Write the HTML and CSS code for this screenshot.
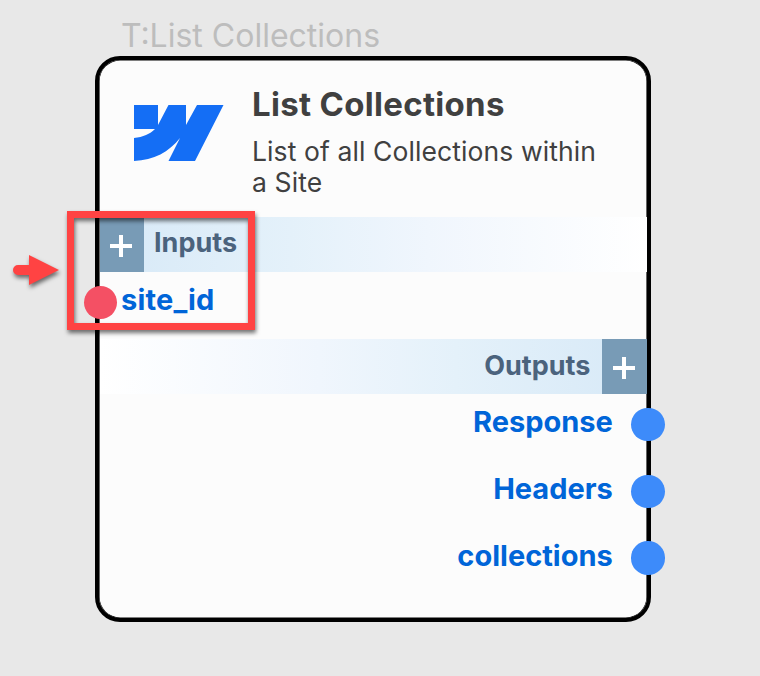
FILE: index.html
```html
<!DOCTYPE html>
<html lang="en">
<head>
<meta charset="utf-8">
<title>List Collections</title>
<link rel="stylesheet" href="styles.css">
</head>
<body>
<main class="canvas">
  <div class="caption"><span>T:List Collections</span></div>
  <section class="node">
    <header class="head">
      <svg class="logo" viewBox="0 0 90 57" aria-hidden="true"><path d="M0 0H24V20L34.500 0H52V20L63 0H89.500L61 56H34.500L46 33C35 47 20 55 0 56V33C9 32 16 29 21 24H0Z"/></svg>
      <div class="intro">
        <h1><span>List Collections</span></h1>
        <p>List of all Collections within<br>a Site</p>
      </div>
    </header>
    <div class="band inputs">
      <span class="add"><svg viewBox="0 0 22 22"><path d="M0 11H22M11 0V22"/></svg></span>
      <span class="band-label">Inputs</span>
    </div>
    <div class="port in"><span class="name">site_id</span><i class="dot red"></i></div>
    <div class="band outputs">
      <span class="band-label">Outputs</span>
      <span class="add"><svg viewBox="0 0 22 22"><path d="M0 11H22M11 0V22"/></svg></span>
    </div>
    <div class="port out"><span class="name">Response</span><i class="dot"></i></div>
    <div class="port out"><span class="name">Headers</span><i class="dot"></i></div>
    <div class="port out"><span class="name">collections</span><i class="dot"></i></div>
  </section>
  <div class="highlight"></div>
  <svg class="arrow" viewBox="0 0 60 50"><path d="M10 15H21V5L51 20L21 35V25H10A5 5 0 0 1 10 15Z"/></svg>
</main>
</body>
</html>
```
FILE: styles.css
```css
* { box-sizing: border-box; }
body { margin: 0; font-family: Inter, "Liberation Sans", sans-serif; }
.canvas { position: relative; width: 760px; height: 676px; padding: 16px 0 0 95px; background: #e8e8e8; overflow: hidden; }
.caption { height: 40px; padding-left: 26px; font-size: 32px; line-height: 40px; font-weight: 380; color: #bdbdbd; white-space: nowrap; }
.node { width: 556.3px; height: 565.6px; padding: .5px; border: 4px solid #000; box-shadow: inset 0 0 0 .6px #000; border-radius: 25px; background: #fcfcfc; }
.head { display: flex; height: 156px; padding: 44.5px 0 0 34.5px; }
.logo { width: 90px; height: 57px; fill: #146ef5; flex: none; }
.intro { margin: -21px 0 0 28px; color: #404040; white-space: nowrap; }
h1 { margin: 0; font-size: 33px; line-height: 40px; font-weight: 700; letter-spacing: .3px; }
p { margin: 12px 0 0; font-size: 26.5px; line-height: 31px; font-weight: 380; letter-spacing: .1px; }
.band { display: flex; height: 55.5px; }
.inputs { background: linear-gradient(90deg, #d7e9f7, #e4f1fa 35%, #f0f6fd 60%, #fff); }
.outputs { justify-content: flex-end; background: linear-gradient(270deg, #d7e9f7, #e4f1fa 35%, #f0f6fd 60%, #fff); }
.add { display: flex; width: 44.5px; height: 100%; align-items: center; justify-content: center; background: #789bb6; }
.add svg { width: 22px; height: 22px; margin: 3px 2px 0 0; fill: none; stroke: #fff; stroke-width: 4; }
.band-label { padding: 0 10px; font-size: 27px; line-height: 52px; font-weight: 700; color: #4b637d; }
.outputs .band-label { padding-right: 12px; line-height: 53px; }
.port { position: relative; height: 66.75px; font-size: 29px; line-height: 56px; font-weight: 700; color: #0065d8; }
.in { padding-left: 21.5px; letter-spacing: .2px; }
.out { padding-right: 34px; text-align: right; }
.dot { position: absolute; top: 13.5px; right: -18px; width: 33.5px; height: 33.5px; border-radius: 50%; background: #3d8bfa; }
.red { right: auto; left: -16px; background: #f45064; }
.highlight { position: absolute; left: 67px; top: 211px; width: 188px; height: 119px; border: 7px solid #ff4343; filter: drop-shadow(1px 3px 2px rgba(0,0,0,.55)); }
.arrow { position: absolute; left: 8px; top: 250px; width: 60px; height: 50px; fill: #ff4343; filter: drop-shadow(1px 3px 2px rgba(0,0,0,.55)); }
```
